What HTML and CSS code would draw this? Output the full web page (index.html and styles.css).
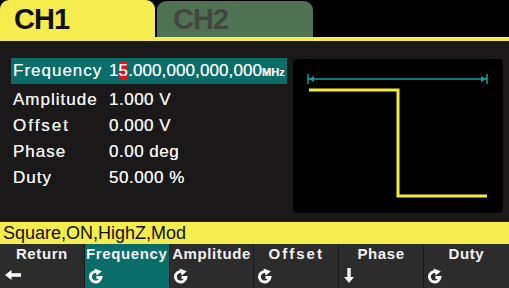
FILE: index.html
```html
<!DOCTYPE html>
<html lang="en">
<head>
    <meta charset="UTF-8">
    <title>CH1 Square</title>
    <link rel="stylesheet" href="styles.css">
</head>
<body>
    <div class="screen">
        <div class="tabs">
            <div class="tab tab-active">CH1</div>
            <div class="tab tab-off">CH2</div>
        </div>
        <div class="rule"></div>

        <div class="main">
            <div class="params">
                <div class="row row-sel">
                    <span class="name">Frequency</span>
                    <span class="value">1<span class="cursor">5</span>.000,000,000,000<span class="unit">MHz</span></span>
                </div>
                <div class="row"><span class="name">Amplitude</span><span class="value">1.000 V</span></div>
                <div class="row"><span class="name spaced">Offset</span><span class="value">0.000 V</span></div>
                <div class="row"><span class="name">Phase</span><span class="value">0.00 deg</span></div>
                <div class="row"><span class="name">Duty</span><span class="value">50.000 %</span></div>
            </div>
            <div class="wave">
                <svg width="210" height="154" viewBox="0 0 210 154">
                    <line x1="15" y1="20" x2="194" y2="20" stroke="#13a09c" stroke-width="1.5"/>
                    <line x1="15" y1="15" x2="15" y2="25" stroke="#13a09c" stroke-width="1.5"/>
                    <line x1="194" y1="15" x2="194" y2="25" stroke="#13a09c" stroke-width="1.5"/>
                    <path d="M16 20 L21 17 L21 23 Z" fill="#13a09c"/>
                    <path d="M193 20 L188 17 L188 23 Z" fill="#13a09c"/>
                    <polyline points="16,31 105,31 105,137 194,137" fill="none" stroke="#f4ec3c" stroke-width="3"/>
                </svg>
            </div>
        </div>

        <div class="status">Square,ON,HighZ,Mod</div>

        <div class="softkeys">
            <div class="key">
                <div class="key-label">Return</div>
                <svg class="key-icon" width="18" height="16" viewBox="0 0 18 16"><path d="M1 8 L7.5 3 L7.5 6.3 L17 6.3 L17 9.7 L7.5 9.7 L7.5 13 Z" fill="#fff"/></svg>
            </div>
            <div class="key key-sel">
                <div class="key-label">Frequency</div>
                <svg class="key-icon" width="14" height="17" viewBox="0 0 14 17"><path d="M10 5.5 A5.3 5.3 0 1 0 12 10.5 H7.5" fill="none" stroke="#fff" stroke-width="2.8"/><path d="M5.5 1.5 L12.8 4.2 L7.8 8.6 Z" fill="#fff"/></svg>
            </div>
            <div class="key">
                <div class="key-label">Amplitude</div>
                <svg class="key-icon" width="14" height="17" viewBox="0 0 14 17"><path d="M10 5.5 A5.3 5.3 0 1 0 12 10.5 H7.5" fill="none" stroke="#fff" stroke-width="2.8"/><path d="M5.5 1.5 L12.8 4.2 L7.8 8.6 Z" fill="#fff"/></svg>
            </div>
            <div class="key">
                <div class="key-label spaced">Offset</div>
                <svg class="key-icon" width="14" height="17" viewBox="0 0 14 17"><path d="M10 5.5 A5.3 5.3 0 1 0 12 10.5 H7.5" fill="none" stroke="#fff" stroke-width="2.8"/><path d="M5.5 1.5 L12.8 4.2 L7.8 8.6 Z" fill="#fff"/></svg>
            </div>
            <div class="key">
                <div class="key-label">Phase</div>
                <svg class="key-icon" width="12" height="17" viewBox="0 0 12 17"><path d="M4.3 1 H7.7 V10 H11 L6 16 L1 10 H4.3 Z" fill="#fff"/></svg>
            </div>
            <div class="key">
                <div class="key-label">Duty</div>
                <svg class="key-icon" width="14" height="17" viewBox="0 0 14 17"><path d="M10 5.5 A5.3 5.3 0 1 0 12 10.5 H7.5" fill="none" stroke="#fff" stroke-width="2.8"/><path d="M5.5 1.5 L12.8 4.2 L7.8 8.6 Z" fill="#fff"/></svg>
            </div>
        </div>
    </div>
</body>
</html>
```

FILE: styles.css
```css
body {
    margin: 0;
    background-color: #000;
    font-family: "Liberation Sans", Arial, sans-serif;
    color: #f2f2f2;
}
.screen {
    width: 509px;
    height: 288px;
    overflow: hidden;
    display: flex;
    flex-direction: column;
}
.tabs {
    height: 37px;
    display: flex;
    align-items: flex-end;
    background-color: #000;
}
.tab {
    box-sizing: border-box;
    font-weight: bold;
    font-size: 29px;
    letter-spacing: -1px;
    line-height: 34px;
    border-radius: 9px 9px 0 0;
}
.tab-active {
    width: 155px;
    height: 37px;
    padding: 2px 0 0 14px;
    background-color: #f5ec4e;
    color: #111;
}
.tab-off {
    width: 156px;
    height: 36px;
    margin-left: 2px;
    padding: 1px 0 0 16px;
    background-color: #4e7252;
    color: #454545;
}
.rule {
    height: 4px;
    background-color: #f5ec4e;
}
.main {
    height: 180px;
    background-color: #1b1819;
    display: flex;
    padding: 17px 6px 0 11px;
    box-sizing: border-box;
}
.params {
    width: 276px;
    flex-shrink: 0;
    margin-right: 6px;
}
.row {
    display: flex;
    height: 26px;
    line-height: 28px;
    font-size: 17px;
    white-space: nowrap;
    text-shadow: 0 0 0.4px #f2f2f2;
}
.row-sel {
    background-color: #0b6d69;
    line-height: 26px;
    margin-bottom: 2px;
}
.name {
    width: 96px;
    flex-shrink: 0;
    padding-left: 2px;
    letter-spacing: 1px;
}
.spaced {
    letter-spacing: 2px;
}
.value {
    letter-spacing: 0.5px;
}
.row-sel .value {
    letter-spacing: 0.1px;
}
.cursor {
    background-color: #e8101c;
}
.unit {
    font-size: 11px;
    font-weight: bold;
    letter-spacing: 0;
}
.wave {
    width: 210px;
    height: 154px;
    margin-top: 1px;
    background-color: #000;
    border-radius: 4px;
}
.wave svg {
    display: block;
}
.status {
    height: 22px;
    background-color: #f5ec4e;
    color: #111;
    font-size: 18px;
    line-height: 23px;
    padding-left: 3px;
    border-top: 1px solid #2a2a2a;
}
.softkeys {
    flex: 1;
    display: flex;
    background-color: #2d2c2c;
}
.key {
    width: 84.8px;
    box-sizing: border-box;
    border-right: 1px solid #1c1b1b;
    display: flex;
    flex-direction: column;
    align-items: flex-start;
    padding-top: 1px;
}
.key:last-child {
    border-right: none;
}
.key-sel {
    background-color: #0b6d69;
}
.key-label {
    align-self: stretch;
    text-align: center;
    font-size: 15px;
    font-weight: bold;
    letter-spacing: 0.6px;
    line-height: 18px;
    white-space: nowrap;
    overflow: hidden;
}
.key-label.spaced {
    letter-spacing: 2px;
}
.key-icon {
    flex-shrink: 0;
    margin: 4px 0 0 4px;
}
```
